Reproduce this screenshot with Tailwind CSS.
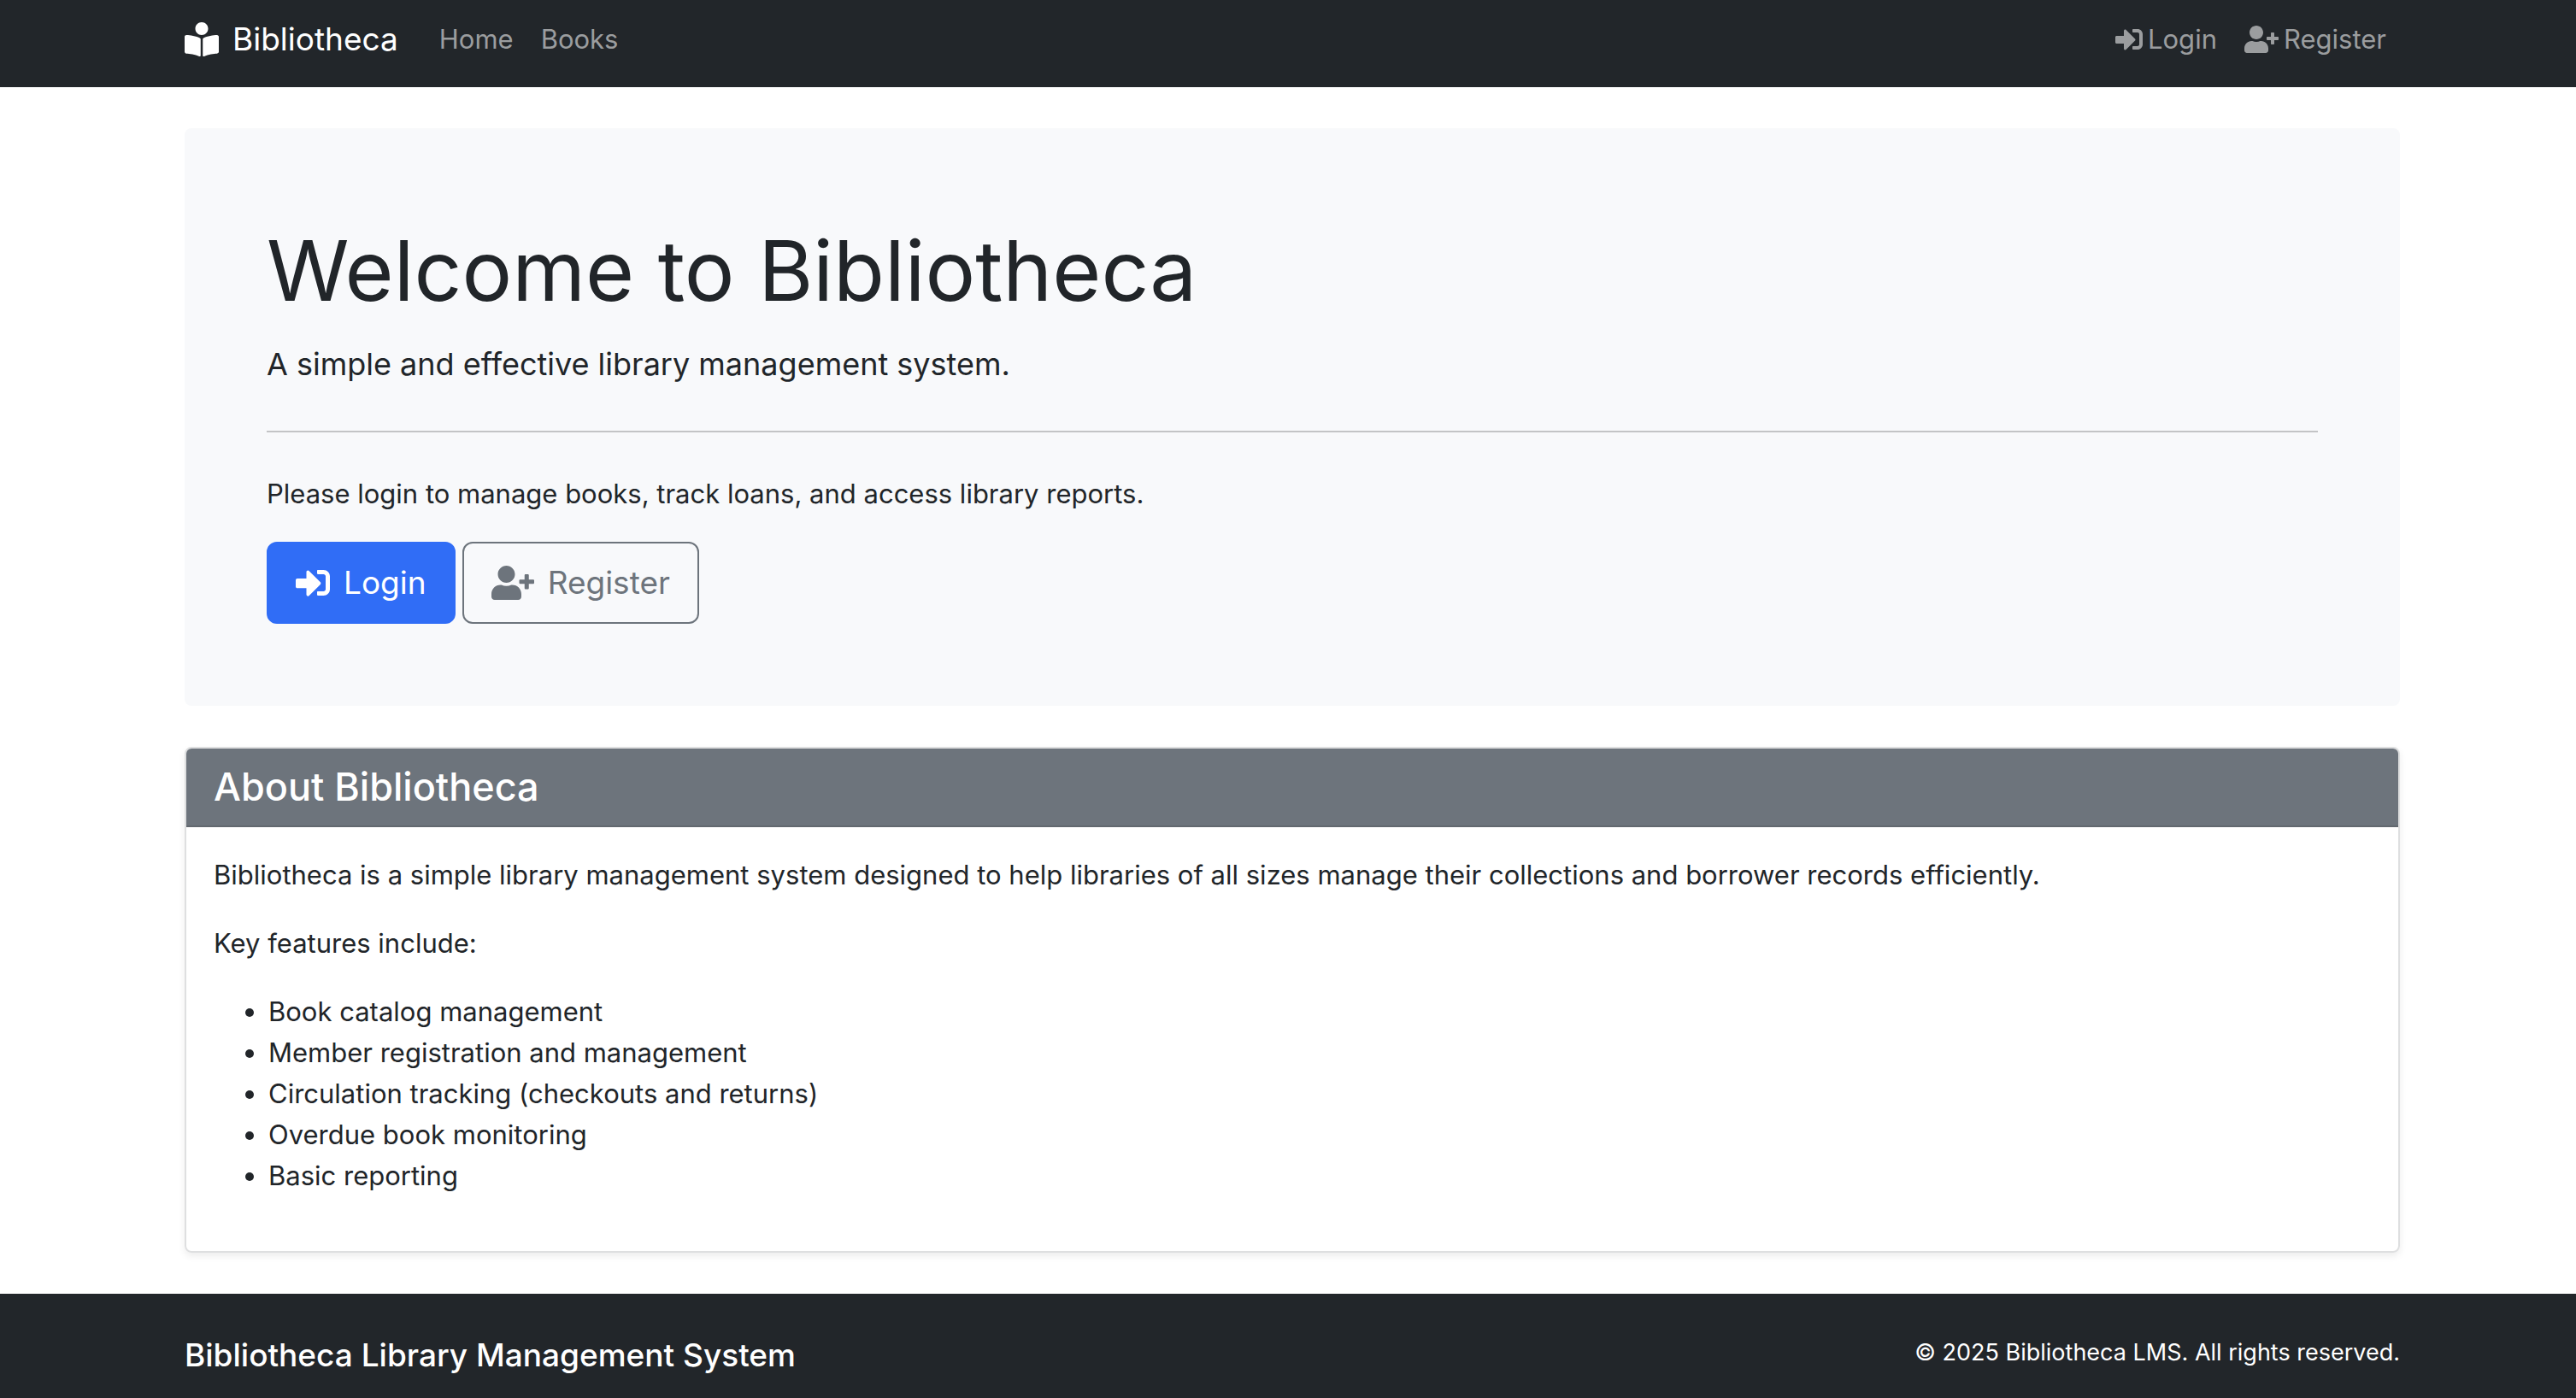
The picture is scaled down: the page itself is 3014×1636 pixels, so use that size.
<!DOCTYPE html>
<html lang="en">
<head>
<meta charset="utf-8">
<meta name="viewport" content="width=device-width, initial-scale=1">
<title>Bibliotheca</title>
<script src="https://cdn.jsdelivr.net/npm/@tailwindcss/browser@4"></script>
</head>
<body class="flex min-h-screen flex-col bg-white font-['Inter',sans-serif] text-[31px] leading-[48px] text-[#212529]">

<!-- Icon sprite -->
<svg class="hidden" aria-hidden="true">
  <symbol id="reader" viewBox="0 0 512 512"><path fill="currentColor" d="M352 96c0-53.02-42.98-96-96-96s-96 42.98-96 96 42.98 96 96 96 96-42.98 96-96zM233.59 241.1c-59.33-36.32-155.43-46.3-203.79-49.05C13.55 191.13 0 203.51 0 219.14v222.8c0 14.33 11.59 26.28 26.49 27.05 43.66 2.29 131.99 10.68 193.04 41.43 9.37 4.72 20.48-1.71 20.48-11.87V252.56c-.01-4.67-2.32-8.95-6.42-11.46zm248.61-49.05c-48.35 2.74-144.46 12.73-203.78 49.05-4.1 2.51-6.41 6.96-6.41 11.63v245.79c0 10.19 11.14 16.63 20.54 11.9 61.04-30.72 149.32-39.11 192.97-41.4 14.9-.78 26.49-12.73 26.49-27.06V219.14c-.01-15.63-13.56-28.01-29.81-27.09z"/></symbol>
  <symbol id="sign-in" viewBox="0 0 512 512"><path fill="currentColor" d="M416 448h-84c-6.6 0-12-5.4-12-12v-40c0-6.6 5.4-12 12-12h84c17.7 0 32-14.3 32-32V160c0-17.7-14.3-32-32-32h-84c-6.6 0-12-5.4-12-12V76c0-6.6 5.4-12 12-12h84c53 0 96 43 96 96v192c0 53-43 96-96 96zm-47-201L201 79c-15-15-41-4.5-41 17v96H24c-13.3 0-24 10.7-24 24v96c0 13.3 10.7 24 24 24h136v96c0 21.5 26 32 41 17l168-168c9.3-9.4 9.3-24.6 0-34z"/></symbol>
  <symbol id="user-plus" viewBox="0 0 640 512"><path fill="currentColor" d="M624 208h-64v-64c0-8.8-7.2-16-16-16h-32c-8.8 0-16 7.2-16 16v64h-64c-8.8 0-16 7.2-16 16v32c0 8.8 7.2 16 16 16h64v64c0 8.8 7.2 16 16 16h32c8.8 0 16-7.2 16-16v-64h64c8.8 0 16-7.2 16-16v-32c0-8.8-7.2-16-16-16zm-400 48c70.7 0 128-57.3 128-128S294.7 0 224 0 96 57.3 96 128s57.3 128 128 128zm89.6 32h-16.7c-22.2 10.2-46.9 16-72.9 16s-50.6-5.8-72.9-16h-16.7C60.2 288 0 348.2 0 422.4V464c0 26.5 21.5 48 48 48h352c26.5 0 48-21.5 48-48v-41.6c0-74.2-60.2-134.4-134.4-134.4z"/></symbol>
</svg>

<header class="bg-[#22262a] pt-1.5 pb-4 pl-[10px]">
  <nav class="mx-auto flex h-20 max-w-[2640px] items-center px-6">
    <a href="#" class="mr-8 flex items-center gap-4 text-[37px] text-white">
      <svg class="size-10" aria-hidden="true"><use href="#reader"/></svg>Bibliotheca
    </a>
    <ul class="flex flex-1 text-[#9b9d9f]">
      <li><a href="#" class="block px-4">Home</a></li>
      <li><a href="#" class="block px-4">Books</a></li>
      <li class="ml-auto"><a href="#" class="flex items-center gap-1.5 px-4"><svg class="size-8" aria-hidden="true"><use href="#sign-in"/></svg>Login</a></li>
      <li><a href="#" class="flex items-center gap-1.5 px-4"><svg class="h-8 w-10" aria-hidden="true"><use href="#user-plus"/></svg>Register</a></li>
    </ul>
  </nav>
</header>

<main class="py-12 pl-[10px]">
  <div class="mx-auto flex max-w-[2640px] flex-col gap-12 px-6">

    <section class="rounded-lg bg-[#f8f9fb] p-24">
      <h1 class="pt-1 text-[98px] leading-[134px]">Welcome to Bibliotheca</h1>
      <p class="mt-3 text-[36px] leading-[60px]">A simple and effective library management system.</p>
      <hr class="my-12 border-t-2 border-[#c3c4c6]">
      <p>Please login to manage books, track loans, and access library reports.</p>
      <div class="mt-8 flex gap-2 text-[37px]">
        <a href="#" class="flex h-24 items-center gap-4 rounded-xl border-2 border-[#306df6] bg-[#306df6] px-8 text-white"><svg class="size-10" aria-hidden="true"><use href="#sign-in"/></svg>Login</a>
        <a href="#" class="flex h-24 items-center gap-4 rounded-xl border-2 border-[#6d747c] px-8 text-[#6d747c]"><svg class="h-10 w-[50px]" aria-hidden="true"><use href="#user-plus"/></svg>Register</a>
      </div>
    </section>

    <section class="rounded-lg border-2 border-[#dedfe0] shadow-[0_4px_8px_rgba(0,0,0,0.075)]">
      <h2 class="rounded-t-md border-b-2 border-[#62686f] bg-[#6d747c] px-8 py-4 text-[45px] leading-[58px] font-medium text-white">About Bibliotheca</h2>
      <div class="flex flex-col gap-8 px-8 pt-8 pb-16">
        <p>Bibliotheca is a simple library management system designed to help libraries of all sizes manage their collections and borrower records efficiently.</p>
        <p>Key features include:</p>
        <ul class="list-disc pl-16">
          <li>Book catalog management</li>
          <li>Member registration and management</li>
          <li>Circulation tracking (checkouts and returns)</li>
          <li>Overdue book monitoring</li>
          <li>Basic reporting</li>
        </ul>
      </div>
    </section>

  </div>
</main>

<footer class="flex-1 bg-[#22262a] pt-12 pl-[10px] text-white">
  <div class="mx-auto flex max-w-[2640px] items-start justify-between px-6">
    <h2 class="text-[37px] font-medium">Bibliotheca Library Management System</h2>
    <p class="text-[27px] leading-[42px]">© 2025 Bibliotheca LMS. All rights reserved.</p>
  </div>
</footer>

</body>
</html>
